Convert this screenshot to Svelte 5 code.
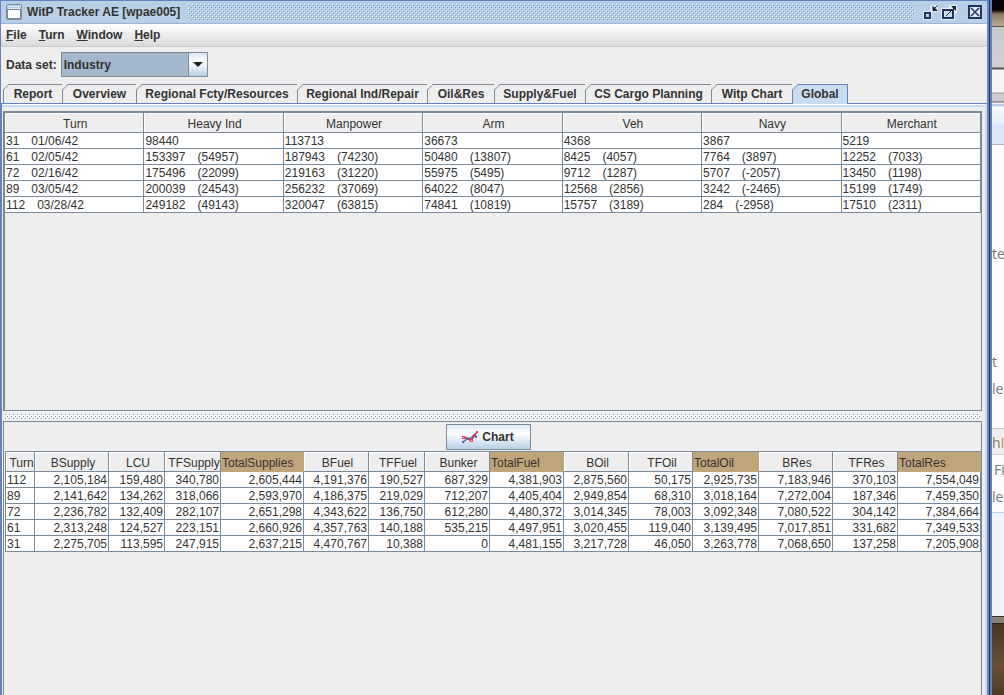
<script>
    const menus = ["File", "Turn", "Window", "Help"];
    const tabs = [
        { name: "Report", width: 60 },
        { name: "Overview", width: 74 },
        { name: "Regional Fcty/Resources", width: 161 },
        { name: "Regional Ind/Repair", width: 130 },
        { name: "Oil&Res", width: 67 },
        { name: "Supply&Fuel", width: 91 },
        { name: "CS Cargo Planning", width: 126 },
        { name: "Witp Chart", width: 81 },
        { name: "Global", width: 55 },
    ];
    let active = "Global";
    let dataset = "Industry";

    const industryCols = ["Turn", "Heavy Ind", "Manpower", "Arm", "Veh", "Navy", "Merchant"];
    // [value, change since the previous turn]
    const industry = [
        [["31", "01/06/42"], ["98440"], ["113713"], ["36673"], ["4368"], ["3867"], ["5219"]],
        [["61", "02/05/42"], ["153397", "(54957)"], ["187943", "(74230)"], ["50480", "(13807)"], ["8425", "(4057)"], ["7764", "(3897)"], ["12252", "(7033)"]],
        [["72", "02/16/42"], ["175496", "(22099)"], ["219163", "(31220)"], ["55975", "(5495)"], ["9712", "(1287)"], ["5707", "(-2057)"], ["13450", "(1198)"]],
        [["89", "03/05/42"], ["200039", "(24543)"], ["256232", "(37069)"], ["64022", "(8047)"], ["12568", "(2856)"], ["3242", "(-2465)"], ["15199", "(1749)"]],
        [["112", "03/28/42"], ["249182", "(49143)"], ["320047", "(63815)"], ["74841", "(10819)"], ["15757", "(3189)"], ["284", "(-2958)"], ["17510", "(2311)"]],
    ];

    const supplyCols = [
        { name: "Turn", width: 29 },
        { name: "BSupply", width: 74 },
        { name: "LCU", width: 56 },
        { name: "TFSupply", width: 56 },
        { name: "TotalSupplies", width: 83, total: true },
        { name: "BFuel", width: 65 },
        { name: "TFFuel", width: 56 },
        { name: "Bunker", width: 65 },
        { name: "TotalFuel", width: 74, total: true },
        { name: "BOil", width: 65 },
        { name: "TFOil", width: 64 },
        { name: "TotalOil", width: 66, total: true },
        { name: "BRes", width: 74 },
        { name: "TFRes", width: 65 },
        { name: "TotalRes", width: 83, total: true },
    ];
    const supply = [
        ["112", "2,105,184", "159,480", "340,780", "2,605,444", "4,191,376", "190,527", "687,329", "4,381,903", "2,875,560", "50,175", "2,925,735", "7,183,946", "370,103", "7,554,049"],
        ["89", "2,141,642", "134,262", "318,066", "2,593,970", "4,186,375", "219,029", "712,207", "4,405,404", "2,949,854", "68,310", "3,018,164", "7,272,004", "187,346", "7,459,350"],
        ["72", "2,236,782", "132,409", "282,107", "2,651,298", "4,343,622", "136,750", "612,280", "4,480,372", "3,014,345", "78,003", "3,092,348", "7,080,522", "304,142", "7,384,664"],
        ["61", "2,313,248", "124,527", "223,151", "2,660,926", "4,357,763", "140,188", "535,215", "4,497,951", "3,020,455", "119,040", "3,139,495", "7,017,851", "331,682", "7,349,533"],
        ["31", "2,275,705", "113,595", "247,915", "2,637,215", "4,470,767", "10,388", "0", "4,481,155", "3,217,728", "46,050", "3,263,778", "7,068,650", "137,258", "7,205,908"],
    ];
</script>

<div class="desktop">
<main class="window">
<header class="titlebar">
<svg class="appicon" width="16" height="16" viewBox="0 0 16 16">
<rect x="0.5" y="0.5" width="15" height="15" rx="1" fill="#fff" stroke="#7a8a99" />
<rect x="1" y="1" width="14" height="4" fill="#b8cfe5" />
<path d="M2 2.500h12M3 4.500h11" stroke="#fff" stroke-dasharray="1 1" />
<path d="M1 5.500h14M1.500 5v10M14.500 5v10M1 14.500h14" stroke="#7a8a99" fill="none" />
</svg>
<h1>WitP Tracker AE [wpae005]</h1>
<div class="bumps"></div>
<button class="winbtn" aria-label="Minimize">
<svg width="16" height="16" viewBox="0 0 16 16">
<path d="M1 7h7V1h8v7h-6v8H1z" fill="#dce9f6" />
<rect x="3" y="9" width="5" height="5" fill="#b8cfe5" stroke="#26335e" stroke-width="2" />
<path d="M11 2.500v4h4zM11.500 5.500L15.500 1.500" stroke="#222" fill="#222" />
</svg>
</button>
<button class="winbtn" aria-label="Maximize">
<svg width="16" height="16" viewBox="0 0 16 16">
<path d="M0 4h8V1h8v8h-2v7H0z" fill="#e8f1fa" />
<rect x="2" y="6" width="10" height="8" fill="#c8ddf2" stroke="#26335e" stroke-width="2" />
<path d="M5 12L14 3" stroke="#222" />
<path d="M10 2h5v5z" fill="#222" />
</svg>
</button>
<button class="winbtn close" aria-label="Close">
<svg width="16" height="16" viewBox="0 0 16 16">
<rect x="2" y="2" width="12" height="12" fill="#dce9f6" stroke="#26335e" stroke-width="2" />
<path d="M4 4l8 8M12 4l-8 8" stroke="#26335e" stroke-width="1.500" />
</svg>
</button>
</header>

<nav class="menubar">
{#each menus as m}
<button><u>{m[0]}</u>{m.slice(1)}</button>
{/each}
</nav>

<div class="dataset">
<label for="dataset">Data set:</label>
<div class="combo">
<select id="dataset" bind:value={dataset}>
<option>Industry</option>
</select>
<svg width="18" height="23" viewBox="0 0 18 23"><path d="M4 9h10l-5 5z" fill="#222" /></svg>
</div>
</div>

<div class="tabs" role="tablist">
{#each tabs as t}
<button role="tab" class="tab" class:active={active == t.name} aria-selected={active == t.name} style="width: {t.width}px" on:click={() => (active = t.name)}>
<svg width="7" height="7" viewBox="0 0 7 7"><path d="M0 0h6L0 6z" fill="#eee" /><path d="M0 6.500L6.500 0" stroke="#7a8a99" /></svg>
{t.name}
</button>
{/each}
</div>

<section class="body">
<div class="pane upper">
<table class="industry">
<thead>
<tr>{#each industryCols as c}<th>{c}</th>{/each}</tr>
</thead>
<tbody>
{#each industry as row}
<tr>
{#each row as cell}
<td>{cell[0]}{#if cell[1]}<span class="change">{cell[1]}</span>{/if}</td>
{/each}
</tr>
{/each}
</tbody>
</table>
</div>
<div class="divider"></div>
<div class="pane lower">
<div class="toolbar">
<button class="chart">
<svg width="16" height="13" viewBox="0 0 16 13">
<path d="M1 11L5 8l4-1 3-3 3 2" stroke="#4a6cb0" stroke-width="1.500" fill="none" />
<path d="M1 6l4 1 4 3 3-5 3-4" stroke="#d8283c" stroke-width="1.500" fill="none" />
<path d="M0 10h2v2H0zM4 7h2v2H4zM13 5h2v2h-2z" fill="#4a6cb0" />
<path d="M0 5h3v3H0zM8 8h3v3H8zM14 0h2v2h-2z" fill="#e0485a" />
<path d="M1 6h1v1H1zM9 9h1v1H9z" fill="#f6d8dc" />
</svg>
Chart
</button>
</div>
<table class="supply">
<colgroup>
{#each supplyCols as c}<col style="width: {c.width}px" />{/each}
</colgroup>
<thead>
<tr>{#each supplyCols as c}<th class:total={c.total}>{c.name}</th>{/each}</tr>
</thead>
<tbody>
{#each supply as row}
<tr>{#each row as v}<td>{v}</td>{/each}</tr>
{/each}
</tbody>
</table>
</div>
</section>
</main>

<!-- sliver of the windows lying behind -->
<aside class="behind">
<div class="photo"></div>
<div class="chrome"></div>
<div class="page">
<p>te</p>
<p class="gap">t</p>
<p>le</p>
<p class="head">h<b>I</b></p>
<p class="indent">Fi</p>
<p>le</p>
</div>
<div class="foot"></div>
<div class="edge"></div>
<div class="wood"></div>
</aside>
</div>

<style>
    :global(body) {
        margin: 0;
        background: #eee;
    }
    .desktop {
        display: flex;
        height: 100vh;
        overflow: hidden;
        font: 12px "Liberation Sans", Arial, sans-serif;
        color: #333;
    }
    button {
        font: inherit;
        color: inherit;
        border: 0;
        padding: 0;
        background: none;
    }
    .window {
        flex: 1;
        min-width: 0;
        display: flex;
        flex-direction: column;
        box-sizing: border-box;
        margin-right: 1px;
        background: #eee;
        border: 1px solid #6382bf;
        border-right: 2px solid #6f86b4;
        border-bottom: 0;
        box-shadow: 1px 0 #26335e;
    }
    .titlebar {
        display: flex;
        align-items: center;
        height: 22px;
        padding: 0 4px 0 5px;
        background: #b8cfe5;
        border-bottom: 1px solid #9fb4d4;
    }
    h1 {
        margin: 0 8px 0 5px;
        font-size: 12px;
        font-weight: bold;
        white-space: nowrap;
    }
    .bumps {
        flex: 1;
        height: 16px;
        margin-right: 4px;
        background-image: conic-gradient(at 1px 1px, transparent 270deg, #e6f0fa 0),
            conic-gradient(at 1px 1px, transparent 270deg, #e6f0fa 0),
            conic-gradient(at 1px 1px, transparent 270deg, #7390c0 0),
            conic-gradient(at 1px 1px, transparent 270deg, #7390c0 0);
        background-size: 4px 4px;
        background-position: 0 0, 2px 2px, 1px 1px, 3px 3px;
    }
    .winbtn {
        width: 16px;
        height: 16px;
        margin-left: 3px;
    }
    .winbtn svg {
        display: block;
    }
    .close {
        margin-left: 10px;
    }
    .menubar {
        display: flex;
        gap: 12px;
        height: 22px;
        padding: 0 5px;
        background: linear-gradient(#fff, #dadada);
        border-bottom: 1px solid #ccc;
    }
    .menubar button {
        font-weight: bold;
    }
    .dataset {
        display: flex;
        align-items: center;
        gap: 4px;
        padding: 5px 5px 7px;
        font-weight: bold;
    }
    .combo {
        display: flex;
        width: 145px;
        height: 23px;
        border: 1px solid #7a8a99;
        background: linear-gradient(#dde8f3, #fff 40%, #b8cfe5);
    }
    .combo select {
        flex: 1;
        min-width: 0;
        appearance: none;
        font: inherit;
        color: inherit;
        padding: 0 2px;
        border: 0;
        border-right: 1px solid #7a8a99;
        border-radius: 0;
        background: #a3b8cc;
    }
    .tabs {
        display: flex;
        padding-left: 2px;
        border-bottom: 1px solid #6382bf;
    }
    .tab {
        position: relative;
        box-sizing: border-box;
        height: 19px;
        font-weight: bold;
        white-space: nowrap;
        border-top: 1px solid #7a8a99;
        border-right: 1px solid #7a8a99;
    }
    .tab:first-child {
        border-left: 1px solid #7a8a99;
    }
    .tab svg {
        position: absolute;
        left: -1px;
        top: -1px;
    }
    .active {
        height: 20px;
        margin-bottom: -1px;
        padding-bottom: 1px;
        background: #c8ddf2;
        border-color: #6382bf;
    }
    .body {
        flex: 1;
        min-height: 0;
        display: flex;
        flex-direction: column;
        padding: 6px 3px 0 1px;
        border-left: 1px solid #6382bf;
        border-right: 2px solid #c8ddf2;
        box-shadow: inset 0 1px #fff, inset 0 3px #c8ddf2;
    }
    .pane {
        box-sizing: border-box;
        border: 1px solid #7a8a99;
    }
    .upper {
        flex: 0 0 300px;
        border-top-width: 2px;
        border-left-width: 2px;
        margin-top: 1px;
    }
    .divider {
        flex: 0 0 5px;
        margin: 3px 2px 2px;
        background-color: #f6f6f6;
        background-image: conic-gradient(at 1px 1px, transparent 270deg, #7a8a99 0),
            conic-gradient(at 1px 1px, transparent 270deg, #7a8a99 0);
        background-size: 4px 4px;
        background-position: 0 0, 2px 2px;
    }
    .lower {
        flex: 1;
        min-height: 0;
        padding: 0 0 0 1px;
        border-bottom: 0;
    }
    .toolbar {
        display: flex;
        justify-content: center;
        padding: 2px 10px 1px 0;
    }
    .chart {
        display: flex;
        align-items: center;
        justify-content: center;
        gap: 4px;
        box-sizing: border-box;
        width: 85px;
        height: 26px;
        font-weight: bold;
        border: 1px solid #7a8a99;
        background: linear-gradient(#dde8f3, #fff 35%, #b8cfe5);
    }
    table {
        width: 100%;
        table-layout: fixed;
        border-spacing: 0;
        background: #fff;
    }
    th,
    td {
        padding: 2px 1px 0;
        height: 13px;
        line-height: 13px;
        white-space: nowrap;
        overflow: hidden;
        border-right: 1px solid #7a8a99;
        border-bottom: 1px solid #7a8a99;
    }
    th {
        height: 16px;
        line-height: 16px;
        padding-top: 3px;
        padding-left: 3px;
        font-weight: normal;
        background: #eee;
        box-shadow: inset 1px 1px #fff;
    }
    .change {
        margin-left: 12px;
    }
    .supply {
        border-top: 1px solid #7a8a99;
        border-left: 1px solid #7a8a99;
    }
    .supply th {
        padding-right: 0;
    }
    .supply td {
        text-align: right;
    }
    .supply td:first-child {
        text-align: left;
    }
    .supply .total {
        padding-left: 1px;
        text-align: left;
        background: #c0a47a;
        border-color: #c0a47a;
        box-shadow: none;
    }
    .behind {
        flex: 0 0 14px;
        box-sizing: border-box;
        display: flex;
        flex-direction: column;
        overflow: hidden;
        border-left: 2px solid #5f7fc0;
        font: 14px "Open Sans", sans-serif;
        color: #777;
        background: #fcfcfc;
    }
    .photo {
        flex: 0 0 26px;
        background: linear-gradient(#080404 10px, #8a7a68 14px, #b5a68c 25px);
        border-bottom: 1px solid #555;
    }
    .chrome {
        flex: 0 0 117px;
        background: linear-gradient(#c4cac9, #d0d0d0 40px, #555 41px, #555 42px, #f4f4f4 43px, #f4f4f4 65px, #999 66px, #ccc 67px, #ccc 74px, #555 75px, #fff 76px, #a8bce0 78px, #f5f9ff 80px, #e6eefa 97px, #dbe5f5 98px);
        border-bottom: 1px solid #aab4c4;
    }
    .page {
        flex: 0 0 272px;
        padding-top: 95px;
        border-bottom: 1px solid #b8cfe5;
    }
    .page p {
        margin: 0;
        height: 27px;
        line-height: 27px;
        white-space: nowrap;
    }
    .page .gap {
        margin-top: 81px;
    }
    .page .head {
        margin: 26px 0 1px;
        box-sizing: border-box;
        background: #eee;
        border-top: 1px solid #ccc;
        border-bottom: 1px solid #ccc;
    }
    .page b {
        font-weight: normal;
        color: #c98a4a;
    }
    .page .indent {
        padding-left: 2px;
    }
    .foot {
        flex: 0 0 103px;
        background: #eff3fc;
    }
    .edge {
        flex: 0 0 6px;
        background: #888078;
        border-top: 1px solid #333;
        border-bottom: 1px solid #222;
    }
    .wood {
        flex: 1;
        background: linear-gradient(#4a3626, #6b4f36 60%, #4f3a28);
    }
</style>
